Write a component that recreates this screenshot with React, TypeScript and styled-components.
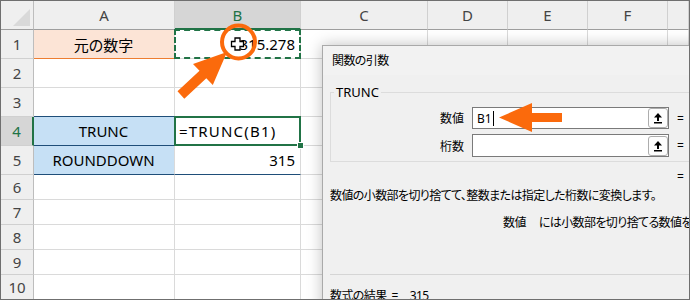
import React from 'react'
import styled, { createGlobalStyle, css } from 'styled-components'

const GlobalStyle = createGlobalStyle`
  html, body {
    margin: 0;
    padding: 0;
    background: #ffffff;
  }
  body {
    font-family: "Noto Sans", "Noto Sans CJK JP", sans-serif;
  }
`

const GREEN = '#217346'
const NAVY = '#1f4e79'
const ORANGE = '#fb6a0c'
const GRID = '#dadada'

const Window = styled.div`
  position: relative;
  width: 690px;
  height: 300px;
  box-sizing: border-box;
  border: 1px solid #6f6f6f;
  overflow: hidden;
  background: #ffffff;
`

const Sheet = styled.div`
  display: grid;
  grid-template-columns: 33px 141px 126px 127px 80px 80px 80px 1fr;
  grid-template-rows: repeat(6, 29px) repeat(5, 25px);
  font-family: "Noto Sans", "Noto Sans CJK JP", sans-serif;
  font-size: 15px;
  font-feature-settings: "palt";
  color: #000;
`

const Corner = styled.div`
  position: relative;
  box-sizing: border-box;
  background: #efefef;
  border-right: 1px solid #bdbdbd;
  border-bottom: 1px solid #9e9e9e;

  &::after {
    content: '';
    position: absolute;
    right: 3px;
    bottom: 3px;
    width: 17px;
    height: 17px;
    background: #d9d9d9;
    clip-path: polygon(100% 0, 100% 100%, 0 100%);
  }
`

const ColHeader = styled.div<{ $active?: boolean }>`
  box-sizing: border-box;
  display: flex;
  align-items: center;
  justify-content: center;
  background: ${p => (p.$active ? '#d6d6d6' : '#efefef')};
  color: ${p => (p.$active ? GREEN : '#444')};
  border-right: 1px solid #d0d0d0;
  border-bottom: ${p => (p.$active ? `2px solid ${GREEN}` : '1px solid #9e9e9e')};
`

const RowHeader = styled.div<{ $active?: boolean }>`
  box-sizing: border-box;
  display: flex;
  align-items: center;
  justify-content: center;
  background: ${p => (p.$active ? '#d6d6d6' : '#efefef')};
  color: ${p => (p.$active ? GREEN : '#444')};
  border-bottom: 1px solid #d0d0d0;
  border-right: ${p => (p.$active ? `2px solid ${GREEN}` : '1px solid #bdbdbd')};
`

type CellProps = {
  $align?: 'left' | 'center' | 'right'
  $fill?: string
  $line?: string
  $marquee?: boolean
  $active?: boolean
  $wide?: boolean
}

const Cell = styled.div<CellProps>`
  position: relative;
  box-sizing: border-box;
  display: flex;
  align-items: center;
  justify-content: ${p =>
    p.$align === 'right' ? 'flex-end' : p.$align === 'center' ? 'center' : 'flex-start'};
  padding: 0 5px 0 4px;
  white-space: nowrap;
  background: ${p => p.$fill ?? '#ffffff'};
  border-right: 1px solid ${GRID};
  border-bottom: 1px solid ${p => p.$line ?? GRID};
  letter-spacing: ${p => (p.$wide ? '1.2px' : 'normal')};

  ${p =>
    p.$marquee &&
    css`
      &::after {
        content: '';
        position: absolute;
        inset: -1px;
        border: 2px dashed ${GREEN};
        pointer-events: none;
      }
    `}

  ${p =>
    p.$active &&
    css`
      &::after {
        content: '';
        position: absolute;
        inset: -1px;
        border: 2px solid ${GREEN};
        pointer-events: none;
      }
      &::before {
        content: '';
        position: absolute;
        right: -4px;
        bottom: -4px;
        width: 5px;
        height: 5px;
        background: ${GREEN};
        border: 1px solid #ffffff;
        z-index: 1;
      }
    `}
`

const Dialog = styled.div`
  position: absolute;
  left: 321px;
  top: 44px;
  width: 420px;
  height: 300px;
  box-sizing: border-box;
  display: flex;
  flex-direction: column;
  background: #f0f0f0;
  border: 1px solid #a9a9a9;
  box-shadow: 0 0 14px rgba(0, 0, 0, 0.25);
  font-family: "Noto Sans", "Noto Sans CJK JP", sans-serif;
  font-size: 12px;
  font-feature-settings: "palt";
  color: #000;
`

const TitleBar = styled.div`
  height: 29px;
  line-height: 30px;
  padding-left: 9px;
  background: #f2f2f2;
  letter-spacing: -0.6px;
`

const Body = styled.div`
  display: flex;
  flex-direction: column;
  padding-left: 7px;
`

const Group = styled.fieldset`
  margin: 9px 0 0 0;
  padding: 7px 0 5px 0;
  border: 1px solid #dcdcdc;
  display: flex;
  flex-direction: column;
  gap: 5px;
`

const Legend = styled.legend`
  margin-left: 3px;
  padding: 0 2px;
  font-size: 13px;
  line-height: 16px;
`

const FieldRow = styled.div`
  display: grid;
  grid-template-columns: 133px 197px auto;
  column-gap: 8px;
  align-items: center;
  height: 22px;
`

const FieldLabel = styled.span`
  text-align: right;
`

const Field = styled.div<{ $tall?: boolean }>`
  box-sizing: border-box;
  display: flex;
  align-items: center;
  height: ${p => (p.$tall ? '23px' : '22px')};
  padding-left: 4px;
  background: #ffffff;
  border: 1px solid #7a7a7a;
`

const Caret = styled.span`
  width: 1px;
  height: 15px;
  margin-left: 1px;
  background: #000;
`

const PickButton = styled.span`
  box-sizing: border-box;
  margin-left: auto;
  width: 20px;
  height: 20px;
  display: flex;
  align-items: center;
  justify-content: center;
  background: #fdfdfd;
  border: 1px solid #adadad;
  border-radius: 3px;
`

const EqRow = styled.div`
  margin-top: 7px;
  padding-left: 347px;
  line-height: 16px;
`

const Description = styled.div`
  margin-top: 3px;
  line-height: 16px;
  white-space: nowrap;
  letter-spacing: -0.6px;
`

const ArgHelp = styled.div`
  margin-top: 11px;
  padding-left: 173px;
  line-height: 16px;
  white-space: nowrap;
  letter-spacing: -0.6px;
`

const ArgName = styled.span`
  margin-right: 13px;
`

const Separator = styled.div`
  margin-top: 43px;
  height: 1px;
  background: #d5d5d5;
`

const Result = styled.div`
  margin-top: 13px;
  line-height: 16px;
  white-space: nowrap;
  letter-spacing: -0.6px;
`

const Gap = styled.span<{ $w: number }>`
  display: inline-block;
  width: ${p => p.$w}px;
`

const Overlay = styled.svg<{ $left: number; $top: number }>`
  position: absolute;
  left: ${p => p.$left}px;
  top: ${p => p.$top}px;
  overflow: visible;
  pointer-events: none;
`

function PickIcon() {
  return (
    <svg width="10" height="12" viewBox="0 0 10 12">
      <polygon points="5,1 9,5.5 1,5.5" fill="#000" />
      <rect x="4" y="5" width="2" height="4" fill="#000" />
      <rect x="1" y="10" width="8" height="1.5" fill="#000" />
    </svg>
  )
}

const columns = ['A', 'B', 'C', 'D', 'E', 'F', '']

export default function App() {
  const blank = (n: number, key: string) =>
    Array.from({ length: n }, (_, i) => <Cell key={`${key}-${i}`} />)

  return (
    <>
      <GlobalStyle />
      <Window>
        <Sheet>
          <Corner />
          {columns.map(c => (
            <ColHeader key={c || 'G'} $active={c === 'B'}>
              {c}
            </ColHeader>
          ))}

          <RowHeader>1</RowHeader>
          <Cell $align="center" $fill="#fce4d6" $line="#ed7d31">
            元の数字
          </Cell>
          <Cell $align="right" $marquee>
            315.278
          </Cell>
          {blank(5, 'r1')}

          <RowHeader>2</RowHeader>
          {blank(7, 'r2')}

          <RowHeader>3</RowHeader>
          <Cell $line={NAVY} />
          <Cell $line={NAVY} />
          {blank(5, 'r3')}

          <RowHeader $active>4</RowHeader>
          <Cell $align="center" $fill="#c6e0f5" $line={NAVY}>
            TRUNC
          </Cell>
          <Cell $active $wide>
            =TRUNC(B1)
          </Cell>
          {blank(5, 'r4')}

          <RowHeader>5</RowHeader>
          <Cell $align="center" $fill="#c6e0f5" $line={NAVY}>
            ROUNDDOWN
          </Cell>
          <Cell $align="right" $line={NAVY}>
            315
          </Cell>
          {blank(5, 'r5')}

          {[6, 7, 8, 9, 10].map(r => (
            <React.Fragment key={r}>
              <RowHeader>{r}</RowHeader>
              {blank(7, `r${r}`)}
            </React.Fragment>
          ))}
        </Sheet>

        <Overlay $left={169} $top={19} width="100" height="90" viewBox="170 20 100 90">
          <polygon
            points="227,52 212.8,85.1 206.3,78.2 184.3,98.7 177.5,91.3 199.5,70.8 193,63.9"
            fill={ORANGE}
          />
          <polygon
            points="235,38 240,38 240,41.5 243.5,41.5 243.5,46.5 240,46.5 240,50 235,50 235,46.5 231.5,46.5 231.5,41.5 235,41.5"
            fill="#ffffff"
            stroke="#000"
            strokeWidth="1.3"
          />
          <circle cx="238.5" cy="42" r="16.5" fill="none" stroke={ORANGE} strokeWidth="4" />
        </Overlay>

        <Dialog>
          <TitleBar>関数の引数</TitleBar>
          <Body>
            <Group>
              <Legend>TRUNC</Legend>
              <FieldRow>
                <FieldLabel>数値</FieldLabel>
                <Field>
                  B1
                  <Caret />
                  <PickButton>
                    <PickIcon />
                  </PickButton>
                </Field>
                <span>=</span>
              </FieldRow>
              <FieldRow>
                <FieldLabel>桁数</FieldLabel>
                <Field $tall>
                  <PickButton>
                    <PickIcon />
                  </PickButton>
                </Field>
                <span>=</span>
              </FieldRow>
            </Group>
            <EqRow>=</EqRow>
            <Description>数値の小数部を切り捨てて、整数または指定した桁数に変換します。</Description>
            <ArgHelp>
              <ArgName>数値</ArgName>
              には小数部を切り捨てる数値を指定します。
            </ArgHelp>
            <Separator />
            <Result>
              数式の結果
              <Gap $w={5} />=<Gap $w={12} />
              315
            </Result>
          </Body>
        </Dialog>

        <Overlay $left={497} $top={99} width="70" height="36" viewBox="498 100 70 36">
          <polygon
            points="499,117.5 532,103 532,113 562,113 562,122 532,122 532,132"
            fill={ORANGE}
          />
        </Overlay>
      </Window>
    </>
  )
}
